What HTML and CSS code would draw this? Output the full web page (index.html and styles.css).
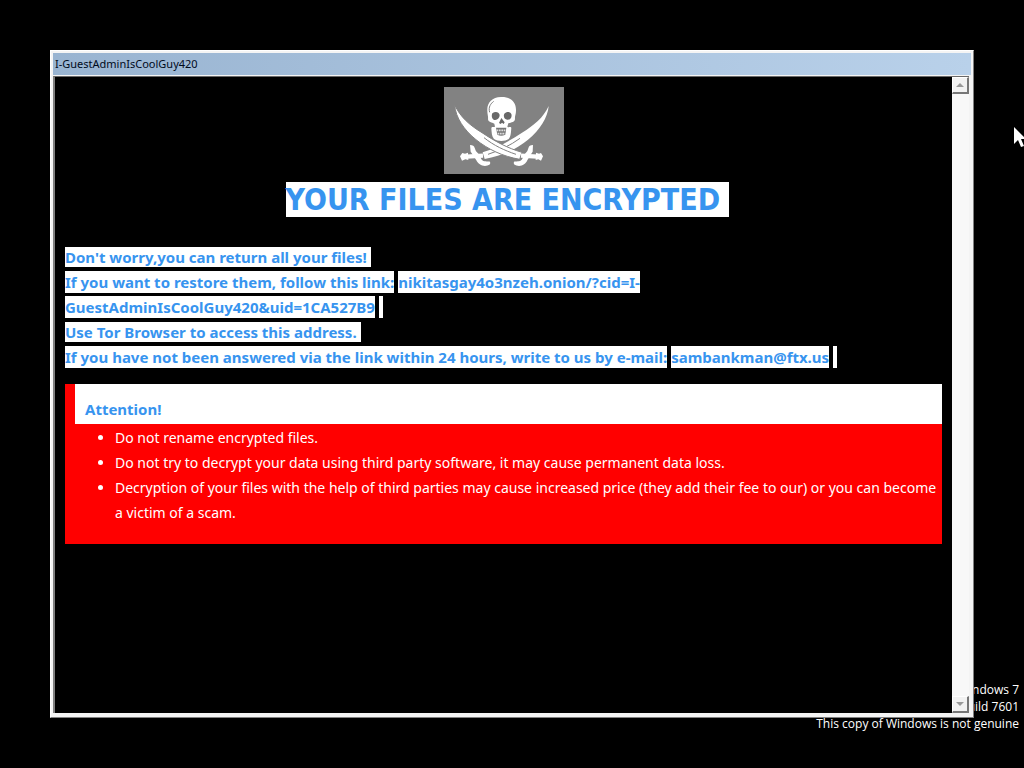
FILE: index.html
```html
<!DOCTYPE html>
<html lang="en">
<head>
  <meta charset="UTF-8">
  <meta name="viewport" content="width=device-width, initial-scale=1.0">
  <title>I-GuestAdminIsCoolGuy420</title>
  <link rel="stylesheet" href="styles.css">
</head>
<body>
  <div class="watermark">
    <p>Windows 7</p>
    <p>Build 7601</p>
    <p>This copy of Windows is not genuine</p>
  </div>

  <main class="window">
    <header class="title-bar">I-GuestAdminIsCoolGuy420</header>

    <div class="window-body">
      <div class="note">
        <svg class="logo" viewBox="0 0 360 261" role="img" aria-label="Skull and crossed swords">
          <rect width="360" height="261" fill="#828282"/>
          <g transform="translate(348 0) scale(-1 1)">
            <path fill="#fff" d="M34 57C50 92 78 115 114 137C153 163 192 184 232 196L226 216C176 208 132 187 96 158C60 129 37 92 34 57Z"/>
            <path d="M120 154C150 176 181 190 216 202" fill="none" stroke="#828282" stroke-width="3"/>
            <path d="M231 206L280 209" stroke="#fff" stroke-width="13"/>
            <path d="M270 174C252 174 258 188 249 196C236 209 238 222 226 223C214 225 207 219 210 232C226 243 244 234 251 220C258 208 262 202 268 194Z" fill="#fff"/>
            <path d="M276 197L285 200L293 198L300 208L294 221L284 217L275 219Z" fill="#fff"/>
          </g>
          <g>
            <path fill="#fff" stroke="#828282" stroke-width="3" d="M32 54C50 92 78 115 114 137C153 163 192 184 234 196L227 217C176 208 132 187 96 158C60 129 35 92 32 54Z"/>
            <path d="M120 152C150 176 181 190 216 202" fill="none" stroke="#828282" stroke-width="3"/>
            <path d="M231 206L280 209" stroke="#fff" stroke-width="13"/>
            <path d="M267 174C249 174 256 188 247 196C235 209 237 222 224 223C214 225 207 219 210 232C226 243 244 234 250 220C257 208 260 202 266 194Z" fill="#fff"/>
            <path d="M276 197L285 200L291 198L297 208L291 221L283 217L275 219Z" fill="#fff"/>
          </g>
          <path fill="#fff" d="M173 30C144 29 128 48 130 72C130 82 133 88 132 96C132 106 144 106 151 110L153 119C147 122 143 117 142 124C143 137 143 148 150 156C160 164 184 164 194 156C201 148 201 134 202 122C198 118 194 123 190 119L193 109C202 105 213 106 213 95C212 87 216 82 216 71C217 46 201 30 173 30Z"/>
          <path fill="#686868" d="M145 79C153 72 165 74 167 84C167 95 158 101 149 98C143 94 142 85 145 79ZM181 80C187 73 199 73 202 81C205 91 199 99 190 98C181 97 177 87 181 80ZM172 93L165 108L170 111L174 107L179 111L182 106Z"/>
          <path d="M137 76C132 60 141 49 149 43" fill="none" stroke="#828282" stroke-width="3"/>
          <path d="M156 122H187L184 143Q171 149 160 143Z" fill="#777"/>
          <path d="M158 130H186M161 140H184" stroke="#ddd" stroke-width="5" stroke-dasharray="5 2"/>
        </svg>

        <h1><span class="mark">YOUR FILES ARE ENCRYPTED&nbsp;</span></h1>

        <div class="message">
          <p><span class="mark">Don't worry,you can return all your files!&nbsp;</span></p>
          <p><span class="mark tall">If you want to restore them, follow this link:</span> <a class="mark tall" href="#">nikitasgay4o3nzeh.onion/?cid=I-<br>GuestAdminIsCoolGuy420&amp;uid=1CA527B9</a> <span class="mark tall">&nbsp;</span></p>
          <p><span class="mark">Use Tor Browser to access this address.&nbsp;</span></p>
          <p><span class="mark tall">If you have not been answered via the link within 24 hours, write to us by e-mail:</span> <a class="mark tall" href="#">sambankman@ftx.us</a> <span class="mark tall">&nbsp;</span></p>
        </div>

        <section class="attention">
          <h2>Attention!</h2>
          <ul>
            <li>Do not rename encrypted files.</li>
            <li>Do not try to decrypt your data using third party software, it may cause permanent data loss.</li>
            <li>Decryption of your files with the help of third parties may cause increased price (they add their fee to our) or you can become a victim of a scam.</li>
          </ul>
        </section>
      </div>

      <div class="scrollbar">
        <button type="button" aria-label="Scroll up"><svg viewBox="0 0 8 4"><path d="M0 4L4 0L8 4Z"/></svg></button>
        <button type="button" aria-label="Scroll down"><svg viewBox="0 0 8 4"><path d="M0 0L4 4L8 0Z"/></svg></button>
      </div>
    </div>
  </main>

  <svg class="cursor" viewBox="0 0 12 20"><path d="M0 0V17L4 13L7 20L10 19L7 12H12Z"/></svg>
</body>
</html>
```

FILE: styles.css
```css
* {
  box-sizing: border-box;
}

body {
  margin: 0;
  padding: 50px;
  min-height: 100vh;
  display: flex;
  background: #000;
  overflow: hidden;
  font-family: "Noto Sans", sans-serif;
}

h1, h2, p, ul {
  margin: 0;
}

.window {
  position: relative;
  flex: 1;
  display: flex;
  flex-direction: column;
  border: 1px solid #fff;
  border-right-color: #808080;
  border-bottom-color: #808080;
  background: #f4f4f4;
  padding: 2px 2px 4px;
}

.title-bar {
  height: 22px;
  padding-left: 2px;
  background: linear-gradient(to right, #99b4d1, #b9d1ea);
  color: #000a1c;
  font-size: 11px;
  line-height: 22px;
}

.window-body {
  flex: 1;
  display: flex;
  margin: 1px 2px 0 0;
  border-top: 1px solid #696969;
  border-left: 2px solid #808080;
}

.note {
  flex: 1;
  padding: 10px;
  background: #000;
  font-size: 14px;
  line-height: 25px;
}

.logo {
  display: block;
  width: 120px;
  height: 87px;
  margin: 0 auto;
}

h1 {
  margin-top: 6px;
  padding-left: 8px;
  font-family: "DejaVu Sans Condensed", "DejaVu Sans", sans-serif;
  font-size: 30px;
  line-height: 40px;
  text-align: center;
}

.mark {
  background: #fff;
  color: #3794ef;
  font-weight: bold;
  text-decoration: none;
}

.tall {
  padding: 1px 0;
}

.message {
  margin-top: 25px;
  font-size: 15px;
}

.attention {
  margin-top: 14px;
  padding-bottom: 19px;
  border-left: 10px solid #f00;
  background: #f00;
  color: #fff;
}

.attention h2 {
  height: 40px;
  padding: 13px 10px 0;
  background: #fff;
  color: #3794ef;
  font-size: 15px;
  line-height: 25px;
}

.attention ul {
  padding: 1px 0 0 40px;
}

.scrollbar {
  width: 17px;
  display: flex;
  flex-direction: column;
  justify-content: space-between;
  background: #f8f8f8;
}

.scrollbar button {
  width: 17px;
  height: 17px;
  padding: 0;
  border: 1px solid #fff;
  border-right: 2px solid #777;
  border-bottom: 2px solid #777;
  background: #f2f2f2;
  display: grid;
  place-items: center;
}

.scrollbar svg {
  width: 8px;
  height: 4px;
  fill: #999;
}

.watermark {
  position: absolute;
  right: 5px;
  bottom: 36px;
  color: #fff;
  font-family: "Open Sans", sans-serif;
  font-size: 12px;
  line-height: 17px;
  text-align: right;
}

.cursor {
  position: absolute;
  top: 127px;
  left: 1014px;
  width: 12px;
  height: 20px;
  fill: #fff;
}
```
